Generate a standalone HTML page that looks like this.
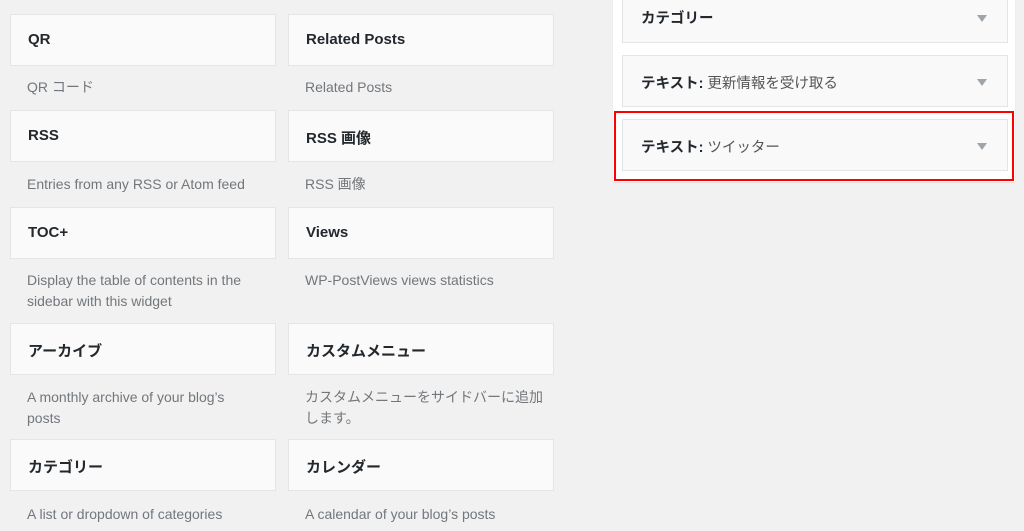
<!DOCTYPE html>
<html><head><meta charset="utf-8"><style>
body{margin:0;width:1024px;height:531px;background:#f1f1f1;position:relative;overflow:hidden;font-family:"Liberation Sans","Noto Sans CJK JP",sans-serif}
.b{position:absolute;width:264px;height:50px;background:#fafafa;border:1px solid #e5e5e5;box-sizing:content-box}
.b span{position:absolute;left:17px;top:16px;font-size:15px;font-weight:bold;color:#23282d}
.d{position:absolute;font-size:14px;color:#72777c;line-height:21px;width:228px}
.panel{position:absolute;left:613px;top:-2px;width:402px;height:184px;background:#fff;box-shadow:0 1px 1px rgba(0,0,0,.06)}
.w{position:absolute;left:622px;width:384px;background:#f9f9f9;border:1px solid #e5e5e5}
.w span{position:absolute;left:18px;font-size:14.5px;font-weight:bold;color:#23282d}
.w i{position:absolute;right:20px;width:0;height:0;border-left:5px solid transparent;border-right:5px solid transparent;border-top:7px solid #a0a5aa}
.red{position:absolute;left:614px;top:111px;width:396px;height:66px;border:2px solid #f00}
</style></head><body>
<div class="b" style="left:10px;top:14px"><span>QR</span></div>
<div class="b" style="left:288px;top:14px"><span>Related Posts</span></div>
<div class="d" style="left:27px;top:77px">QR コード</div>
<div class="d" style="left:305px;top:77px">Related Posts</div>
<div class="b" style="left:10px;top:110px"><span>RSS</span></div>
<div class="b" style="left:288px;top:110px"><span>RSS 画像</span></div>
<div class="d" style="left:27px;top:174px">Entries from any RSS or Atom feed</div>
<div class="d" style="left:305px;top:174px">RSS 画像</div>
<div class="b" style="left:10px;top:207px"><span>TOC+</span></div>
<div class="b" style="left:288px;top:207px"><span>Views</span></div>
<div class="d" style="left:27px;top:270px">Display the table of contents in the sidebar with this widget</div>
<div class="d" style="left:305px;top:270px">WP-PostViews views statistics</div>
<div class="b" style="left:10px;top:323px"><span>アーカイブ</span></div>
<div class="b" style="left:288px;top:323px"><span>カスタムメニュー</span></div>
<div class="d" style="left:27px;top:387px;width:215px">A monthly archive of your blog’s posts</div>
<div class="d" style="left:305px;top:387px;width:240px">カスタムメニューをサイドバーに追加します。</div>
<div class="b" style="left:10px;top:439px"><span>カテゴリー</span></div>
<div class="b" style="left:288px;top:439px"><span>カレンダー</span></div>
<div class="d" style="left:27px;top:504px">A list or dropdown of categories</div>
<div class="d" style="left:305px;top:504px">A calendar of your blog’s posts</div>
<div class="panel"></div>
<div class="w" style="top:-10px;height:51px"><span style="top:16px">カテゴリー</span><i style="top:24px"></i></div>
<div class="w" style="top:55px;height:50px"><span style="top:16px">テキスト: <b style="font-weight:normal;color:#555">更新情報を受け取る</b></span><i style="top:23px"></i></div>
<div class="w" style="top:119px;height:50px"><span style="top:16px">テキスト: <b style="font-weight:normal;color:#555">ツイッター</b></span><i style="top:23px"></i></div>
<div class="red"></div>
</body></html>
